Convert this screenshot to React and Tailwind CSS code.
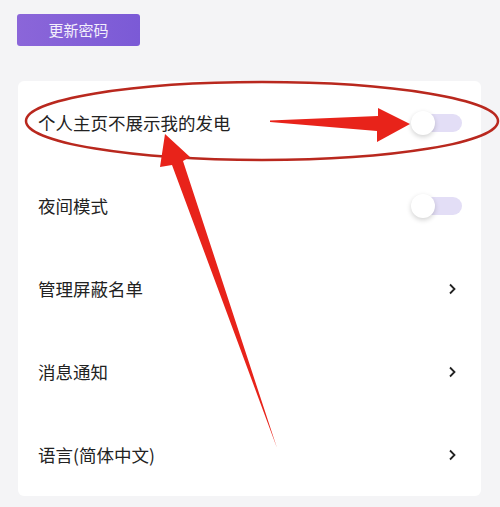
import React from "react";

const font = { fontFamily: '"Noto Sans CJK SC", "Noto Sans", sans-serif' };

function Toggle() {
  return (
    <div className="relative w-[51px] h-[24px] flex items-center">
      <div className="absolute left-[3px] right-0 h-[18px] rounded-full bg-[#e3def6]" />
      <div className="absolute left-0 w-[24px] h-[24px] rounded-full bg-white shadow-[0_2px_5px_rgba(0,0,0,0.18)]" />
    </div>
  );
}

function Chevron() {
  return (
    <svg width="10" height="12" viewBox="0 0 10 12" className="mr-[24px]">
      <path d="M3 1.5 L7.5 6 L3 10.5" fill="none" stroke="#222" strokeWidth="1.8" />
    </svg>
  );
}

function Row({ label, right }) {
  return (
    <div className="h-[83px] flex items-center justify-between pl-[20px]">
      <span className="text-[17.5px] text-[#222] leading-none">{label}</span>
      {right}
    </div>
  );
}

export default function App() {
  return (
    <div className="relative w-[500px] h-[507px] bg-[#f4f4f6] overflow-hidden" style={font}>
      <div className="pt-[14px] pl-[17px]">
        <div className="w-[123px] h-[32px] rounded-[3px] bg-gradient-to-r from-[#8b66d9] to-[#7b5ad6] flex items-center justify-center text-white/90 text-[15px]">
          更新密码
        </div>
      </div>
      <div className="mt-[35px] mx-[18px] w-[463px] bg-white rounded-[6px]">
        <Row label="个人主页不展示我的发电" right={<div className="mr-[19px]"><Toggle /></div>} />
        <Row label="夜间模式" right={<div className="mr-[19px]"><Toggle /></div>} />
        <Row label="管理屏蔽名单" right={<Chevron />} />
        <Row label="消息通知" right={<Chevron />} />
        <Row label="语言(简体中文)" right={<Chevron />} />
      </div>
      <svg className="absolute inset-0 pointer-events-none" width="500" height="507" viewBox="0 0 500 507">
        <ellipse cx="262" cy="121" rx="236" ry="39" fill="none" stroke="#b9281e" strokeWidth="2.5" />
        <polygon points="270,120.5 378,116 378,108 410,124 377,142 377,131 270,122" fill="#e8231a" />
        <polygon points="165,134 190,157 183,161 277,448 172,165 160,167" fill="#e8231a" />
      </svg>
    </div>
  );
}
